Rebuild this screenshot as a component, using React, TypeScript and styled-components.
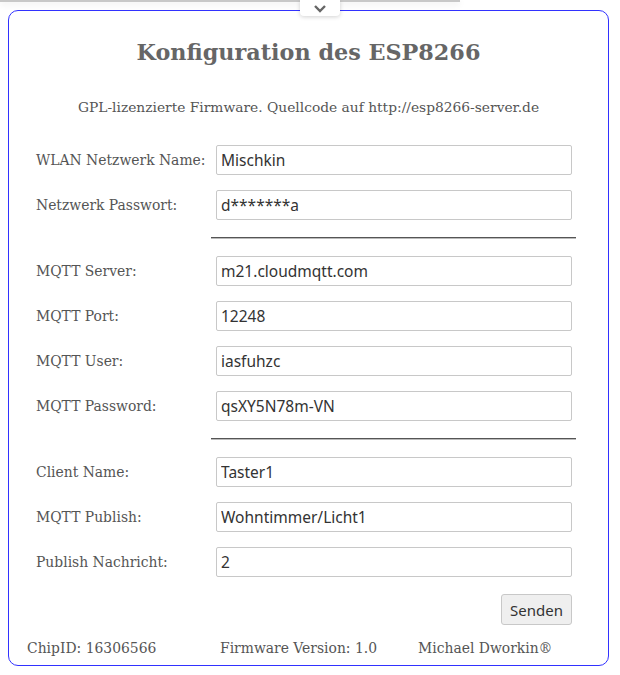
import React from 'react'
import styled, { createGlobalStyle } from 'styled-components'

const GlobalStyle = createGlobalStyle`
  html, body {
    margin: 0;
    padding: 0;
    background: #fff;
  }
  body {
    font-family: "DejaVu Serif", "Liberation Serif", serif;
  }
`

const Page = styled.div`
  position: relative;
  padding: 10px 11px 0 8px;
`

const TopShade = styled.div`
  position: absolute;
  top: 0;
  left: 0;
  width: 460px;
  height: 2px;
  background: #c8c8c8;
  box-shadow: 0 2px 6px rgba(0, 0, 0, 0.12);
`

const PullTab = styled.div`
  position: absolute;
  top: 0;
  left: 300px;
  width: 40px;
  height: 16px;
  background: #fff;
  border-radius: 0 0 4px 4px;
  box-shadow: 0 1px 4px rgba(0, 0, 0, 0.18);
  display: flex;
  align-items: center;
  justify-content: center;
  z-index: 2;
`

const Card = styled.div`
  border: 1px solid #3232ff;
  border-radius: 10px;
  height: 656px;
  box-sizing: border-box;
  padding: 0 27px;
  display: flex;
  flex-direction: column;
`

const Title = styled.h1`
  margin: 26px 0 0;
  text-align: center;
  font-size: 22.3px;
  font-weight: bold;
  color: #666;
  line-height: 30px;
`

const Subtitle = styled.p`
  margin: 30px 0 0;
  text-align: center;
  font-size: 13.8px;
  color: #555;
  line-height: 20px;
`

const Form = styled.div`
  margin: 28px 9px 0 0;
  display: flex;
  flex-direction: column;
  gap: 15px;
`

const Row = styled.div`
  display: grid;
  grid-template-columns: 180px 1fr;
  align-items: center;
`

const Label = styled.label`
  font-size: 13.9px;
  color: #555;
`

const Input = styled.input`
  height: 30px;
  box-sizing: border-box;
  border: 1px solid #c8c8c8;
  border-radius: 2px;
  padding: 0 4px;
  font-family: "Noto Sans", "Open Sans", sans-serif;
  font-size: 15.5px;
  color: #333;
  outline: none;
`

const Divider = styled.hr`
  margin: 2px 0 2px 175px;
  width: 365px;
  border: none;
  border-top: 1px solid #555;
  border-bottom: 1px solid #bbb;
  height: 0;
`

const ButtonRow = styled.div`
  display: flex;
  justify-content: flex-end;
  margin: 17px 9px 0 0;
`

const SendButton = styled.button`
  height: 31px;
  padding: 0 8px;
  background: #efefef;
  border: 1px solid #c8c8c8;
  border-radius: 3px;
  font-family: "Noto Sans", "Open Sans", sans-serif;
  font-size: 15px;
  color: #333;
`

const Footer = styled.div`
  margin: 15px 0 0 -9px;
  display: flex;
  font-size: 13.9px;
  color: #555;
`

const FooterItem = styled.span<{ $width?: number }>`
  width: ${p => (p.$width ? `${p.$width}px` : 'auto')};
  white-space: nowrap;
`

const fields: Array<[string, string] | 'hr'> = [
  ['WLAN Netzwerk Name:', 'Mischkin'],
  ['Netzwerk Passwort:', 'd*******a'],
  'hr',
  ['MQTT Server:', 'm21.cloudmqtt.com'],
  ['MQTT Port:', '12248'],
  ['MQTT User:', 'iasfuhzc'],
  ['MQTT Password:', 'qsXY5N78m-VN'],
  'hr',
  ['Client Name:', 'Taster1'],
  ['MQTT Publish:', 'Wohntimmer/Licht1'],
  ['Publish Nachricht:', '2'],
]

const App = () => {
  return (
    <Page>
      <GlobalStyle />
      <TopShade />
      <PullTab>
        <svg width="14" height="9" viewBox="0 0 14 9">
          <path d="M2 2 L7 7 L12 2" fill="none" stroke="#666" strokeWidth="2.4" />
        </svg>
      </PullTab>
      <Card>
        <Title>Konfiguration des ESP8266</Title>
        <Subtitle>GPL-lizenzierte Firmware. Quellcode auf http://esp8266-server.de</Subtitle>
        <Form>
          {fields.map((f, i) =>
            f === 'hr' ? (
              <Divider key={i} />
            ) : (
              <Row key={i}>
                <Label>{f[0]}</Label>
                <Input defaultValue={f[1]} />
              </Row>
            )
          )}
        </Form>
        <ButtonRow>
          <SendButton>Senden</SendButton>
        </ButtonRow>
        <Footer>
          <FooterItem $width={193}>ChipID: 16306566</FooterItem>
          <FooterItem $width={198}>Firmware Version: 1.0</FooterItem>
          <FooterItem>Michael Dworkin®</FooterItem>
        </Footer>
      </Card>
    </Page>
  )
}

export default App
